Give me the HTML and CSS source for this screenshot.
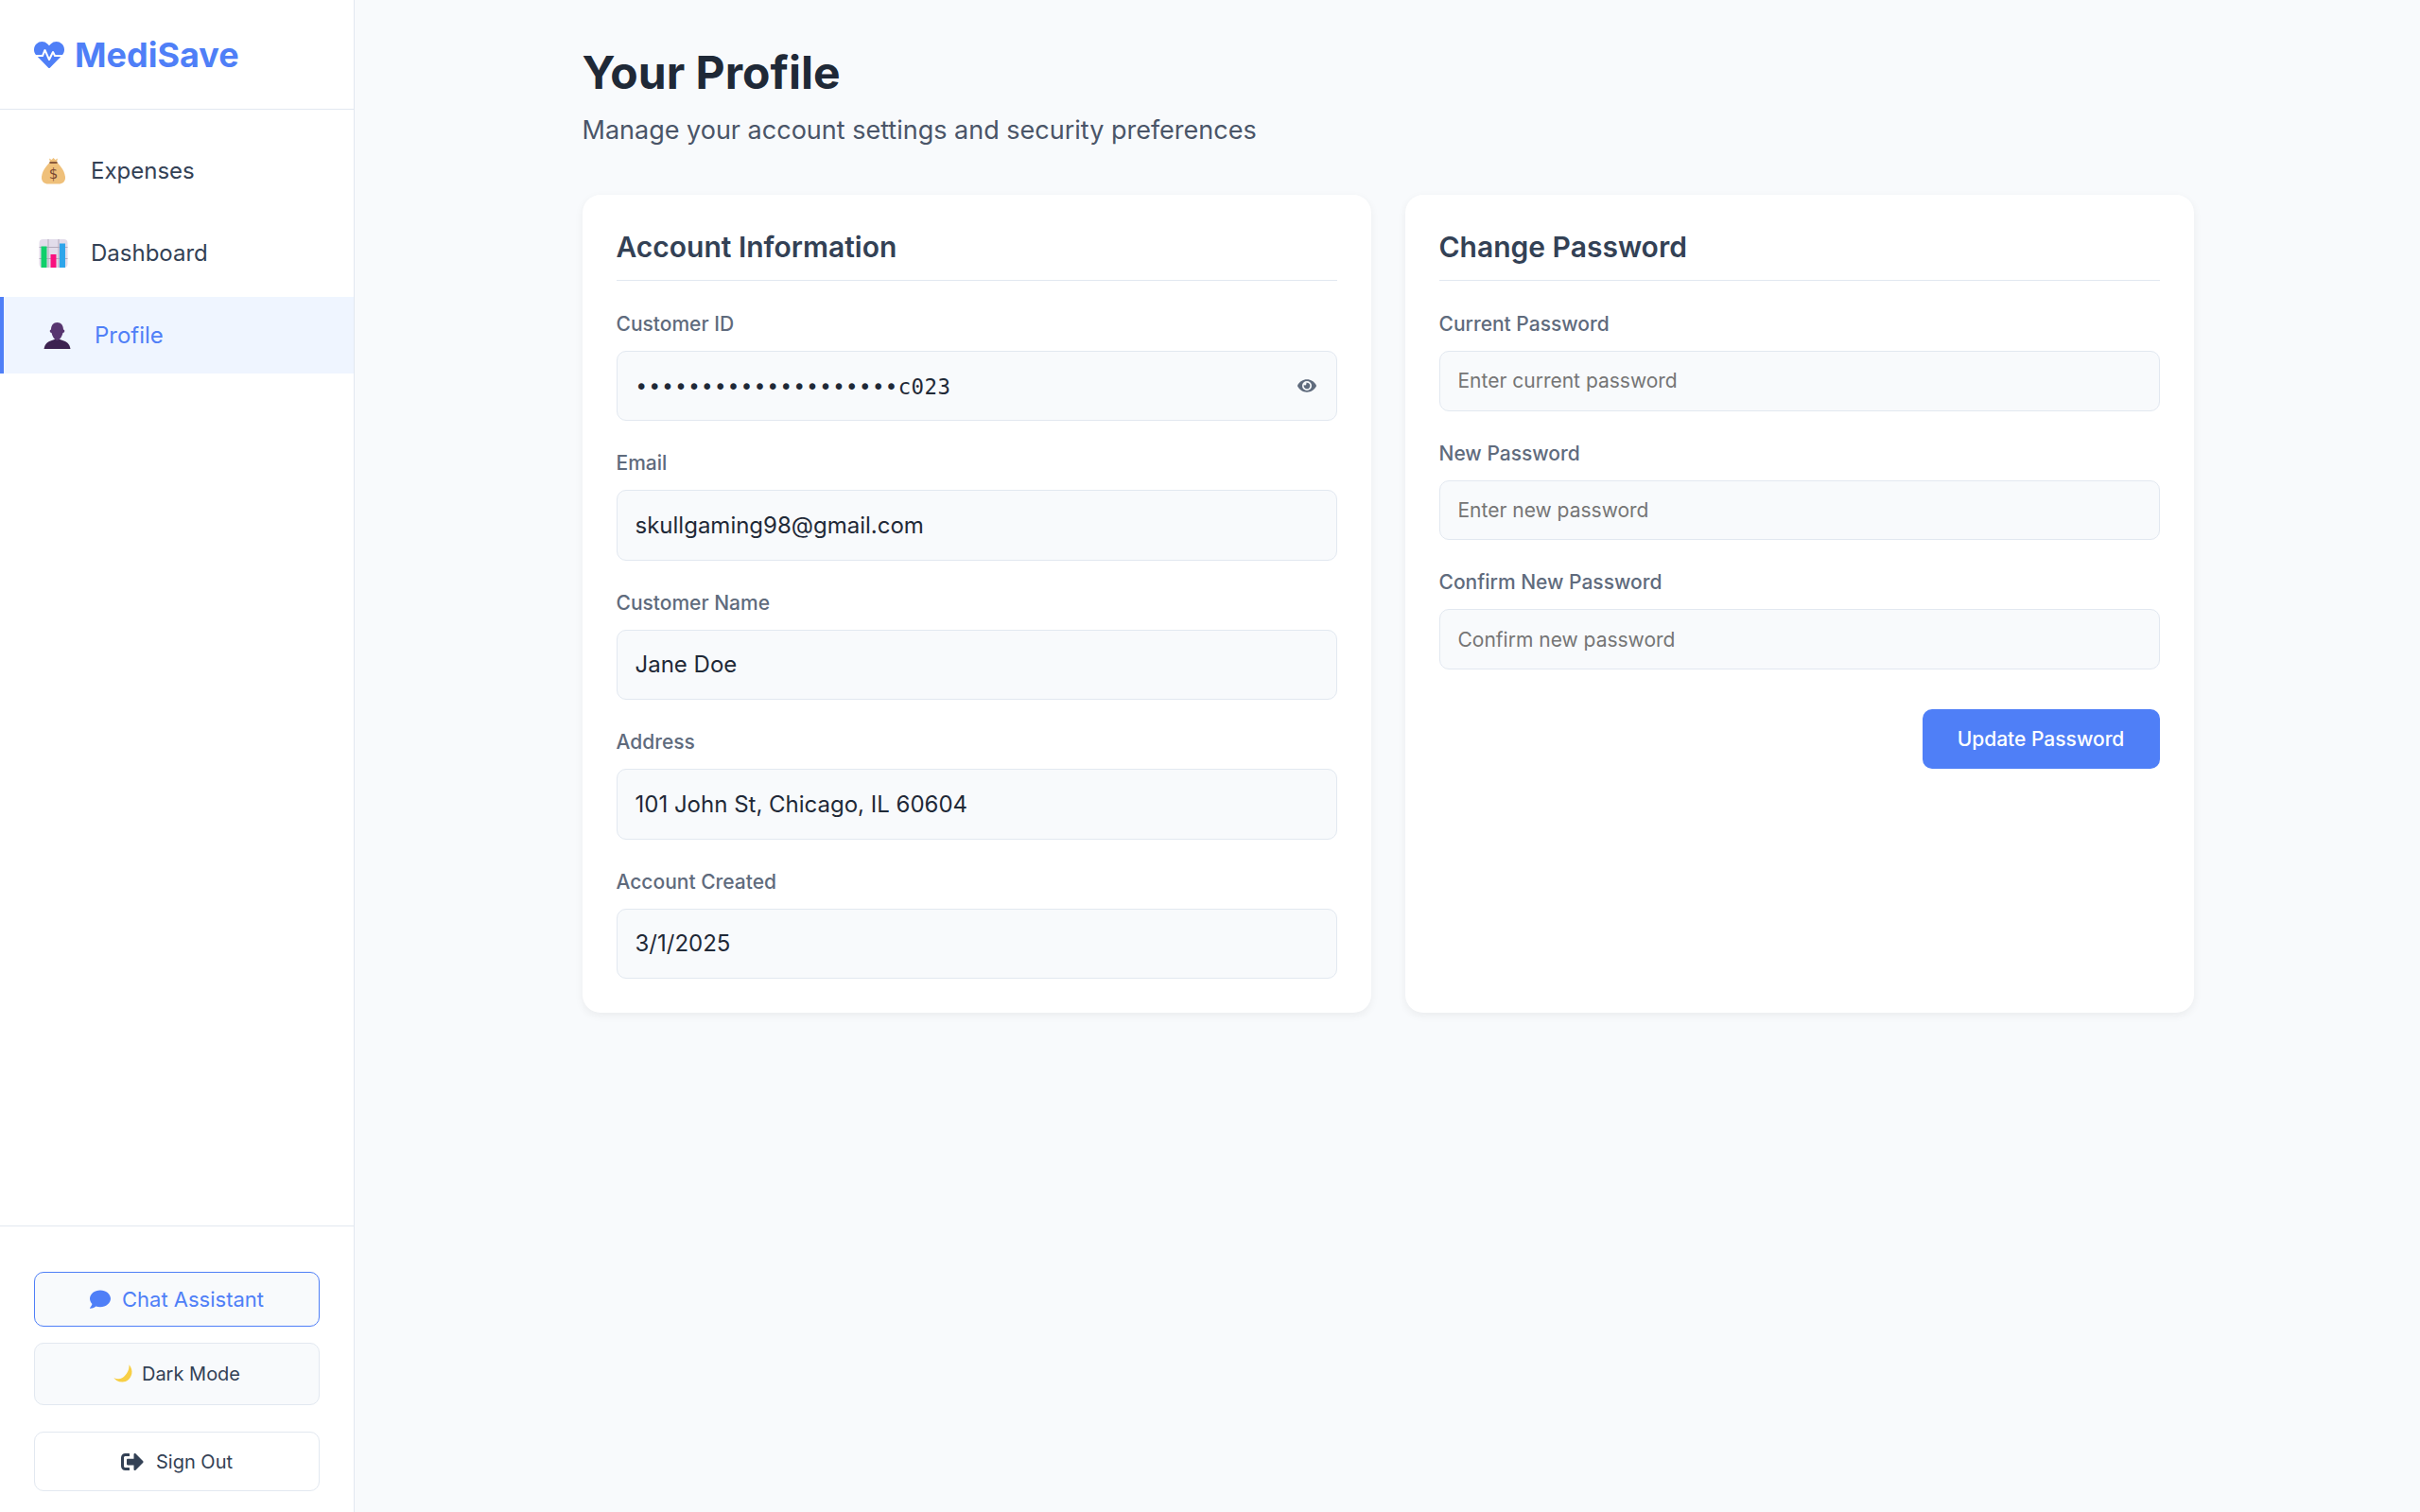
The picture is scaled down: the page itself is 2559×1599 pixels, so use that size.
FILE: index.html
```html
<!DOCTYPE html>
<html lang="en">
<head>
    <meta charset="UTF-8">
    <meta name="viewport" content="width=device-width, initial-scale=1.0">
    <title>MediSave - Your Profile</title>
    <link rel="stylesheet" href="styles.css">
</head>
<body>
    <aside class="sidebar">
        <div class="logo">
            <svg class="logo-icon" viewBox="0 0 512 512"><path d="M320.2 243.8l-49.7 99.4c-6 12.1-23.4 11.7-28.9-.6l-56.9-126.3-30 71.7H60.6l182.5 186.5c7.1 7.3 18.6 7.3 25.7 0L451.4 288H342.3l-22.1-44.2zM473.7 73.9l-2.4-2.5c-51.5-52.6-135.8-52.6-187.4 0L256 100l-27.9-28.5c-51.5-52.7-135.9-52.7-187.4 0l-2.4 2.4C-10.4 123.7-12.5 203 31 256h102.4l35.9-86.2c5.4-12.9 23.6-13.2 29.4-.4l58.2 129.3 49-97.9c5.9-11.8 22.7-11.8 28.6 0l27.6 55.2H481c43.5-53 41.4-132.3-7.3-182.1z"/></svg>
            <span>MediSave</span>
        </div>

        <nav class="nav">
            <a class="nav-item">
                <svg class="emoji" viewBox="0 0 30 30">
                    <path fill="#efc07a" d="M11 5.5h8c1.2 2.6 7.5 7 8.5 15.5.5 5-3 7.5-7 7.5H9.5c-4 0-7.500-2.500-7-7.500C3.500 12.500 9.800 8 11 5.500z"/>
                    <path fill="#efc07a" d="M10.500 1.500l2.500 1.500 2-2 2 2 2.500-1.500-1 4h-7z"/>
                    <rect x="11" y="5" width="8" height="2" fill="#8a5a3a"/>
                    <text x="15" y="23" class="emoji-dollar">$</text>
                </svg>
                <span>Expenses</span>
            </a>
            <a class="nav-item">
                <svg class="emoji" viewBox="0 0 30 30">
                    <rect width="30" height="30" rx="4" fill="#e2dcea"/>
                    <path stroke="#b4aabb" stroke-width="1" fill="none" d="M0 8.500h30M0 20.500h30M9.500 0v30M20.500 0v30"/>
                    <rect x="2" y="7.500" width="6" height="22.500" fill="#10cf6b"/>
                    <rect x="12" y="16" width="6" height="14" fill="#f9107e"/>
                    <rect x="21.500" y="4.500" width="6" height="25.500" fill="#2ea5ea"/>
                </svg>
                <span>Dashboard</span>
            </a>
            <a class="nav-item active">
                <svg class="emoji" viewBox="0 0 30 30">
                    <path fill="#3d2350" d="M1 29c1-5 3-7 7-8.500l4-1.500h6l4 1.500c4 1.500 6 3.500 7 8.500z"/>
                    <path fill="#57356f" d="M15 1c4 0 6.500 3 6.500 7.500l1 .5c.8 1-.2 3-1.500 3-1 3-2 7-6 8-4-1-5-5-6-8-1.300 0-2.300-2-1.500-3l1-.5C8.500 4 11 1 15 1z"/>
                </svg>
                <span>Profile</span>
            </a>
        </nav>

        <div class="sidebar-footer">
            <button class="side-btn chat-btn">
                <svg class="comment-icon" viewBox="0 0 512 512"><path d="M256 32C114.600 32 0 125.100 0 240c0 49.600 21.400 95 57 130.700C44.500 421.100 2.700 466 2.200 466.500c-2.200 2.300-2.800 5.700-1.500 8.700S4.800 480 8 480c66.300 0 116-31.800 140.600-51.400 32.700 12.300 69 19.400 107.400 19.400 141.400 0 256-93.100 256-208S397.400 32 256 32z"/></svg>
                Chat Assistant
            </button>
            <button class="side-btn dark-btn">
                <svg class="moon-icon" viewBox="0 0 20 20"><path fill="#f7cf45" d="M16.500.3C19 3 20 7 19.300 10 18 15 14 18.500 9.500 18.500 5 18.500 2 16.500.3 14c2.700 1.500 6.200 1.800 9.200 0 4-2.500 7.500-8 7-13.700z"/></svg>
                Dark Mode
            </button>
            <button class="side-btn signout-btn">
                <svg class="signout-icon" viewBox="0 0 512 512"><path d="M497 273L329 441c-15 15-41 4.500-41-17v-96H152c-13.300 0-24-10.700-24-24v-96c0-13.300 10.700-24 24-24h136V88c0-21.400 25.900-32 41-17l168 168c9.300 9.400 9.300 24.600 0 34zM192 436v-40c0-6.600-5.400-12-12-12H96c-17.700 0-32-14.300-32-32V160c0-17.700 14.300-32 32-32h84c6.600 0 12-5.400 12-12V76c0-6.600-5.400-12-12-12H96c-53 0-96 43-96 96v192c0 53 43 96 96 96h84c6.600 0 12-5.400 12-12z"/></svg>
                Sign Out
            </button>
        </div>
    </aside>

    <main class="main">
        <div class="content">
            <h1>Your Profile</h1>
            <p class="subtitle">Manage your account settings and security preferences</p>

            <div class="cards">
                <section class="card">
                    <h2>Account Information</h2>
                    <div class="field">
                        <div class="label">Customer ID</div>
                        <div class="value secret">
                            <span class="mono">••••••••••••••••••••c023</span>
                            <svg class="eye-icon" viewBox="0 0 576 512"><path d="M572.520 241.400C518.290 135.590 410.930 64 288 64S57.680 135.640 3.480 241.410a32.350 32.350 0 0 0 0 29.190C57.710 376.410 165.070 448 288 448s230.320-71.640 284.520-177.410a32.350 32.350 0 0 0 0-29.190zM288 400a144 144 0 1 1 144-144 143.930 143.930 0 0 1-144 144zm0-240a95.310 95.310 0 0 0-25.310 3.790 47.850 47.850 0 0 1-66.900 66.900A95.780 95.780 0 1 0 288 160z"/></svg>
                        </div>
                    </div>
                    <div class="field">
                        <div class="label">Email</div>
                        <div class="value">skullgaming98@gmail.com</div>
                    </div>
                    <div class="field">
                        <div class="label">Customer Name</div>
                        <div class="value">Jane Doe</div>
                    </div>
                    <div class="field">
                        <div class="label">Address</div>
                        <div class="value">101 John St, Chicago, IL 60604</div>
                    </div>
                    <div class="field">
                        <div class="label">Account Created</div>
                        <div class="value">3/1/2025</div>
                    </div>
                </section>

                <section class="card">
                    <h2>Change Password</h2>
                    <div class="pw-field">
                        <div class="label">Current Password</div>
                        <div class="pw-input">Enter current password</div>
                    </div>
                    <div class="pw-field">
                        <div class="label">New Password</div>
                        <div class="pw-input">Enter new password</div>
                    </div>
                    <div class="pw-field">
                        <div class="label">Confirm New Password</div>
                        <div class="pw-input">Confirm new password</div>
                    </div>
                    <div class="actions">
                        <button class="primary-btn">Update Password</button>
                    </div>
                </section>
            </div>
        </div>
    </main>
</body>
</html>
```

FILE: styles.css
```css
* {
    box-sizing: border-box;
}

body {
    margin: 0;
    height: 1599px;
    display: flex;
    overflow: hidden;
    font-family: Inter, "Noto Sans", sans-serif;
    background: #f8fafc;
    color: #334155;
}

.sidebar {
    width: 375px;
    flex-shrink: 0;
    display: flex;
    flex-direction: column;
    background: #fff;
    border-right: 1px solid #e2e8f0;
}

.logo {
    height: 116px;
    padding-left: 36px;
    display: flex;
    align-items: center;
    gap: 11px;
    border-bottom: 1px solid #e2e8f0;
    color: #4f7ff7;
    font-size: 36px;
    font-weight: 700;
}

.logo-icon {
    width: 32px;
    height: 32px;
    fill: #4f7ff7;
}

.nav {
    flex: 1;
    padding-top: 24px;
}

.nav-item {
    height: 81px;
    margin-bottom: 6px;
    padding-left: 36px;
    display: flex;
    align-items: center;
    gap: 19px;
    font-size: 24px;
    color: #334155;
}

.nav-item.active {
    border-left: 4px solid #4f7ff7;
    background: #eff5ff;
    color: #4f7ff7;
}

.emoji {
    width: 41px;
    height: 30px;
    flex-shrink: 0;
}

.emoji-dollar {
    font-size: 15px;
    font-family: "DejaVu Sans", sans-serif;
    fill: #7b4a32;
    text-anchor: middle;
}

.sidebar-footer {
    padding: 48px 36px 22px;
    display: flex;
    flex-direction: column;
    border-top: 1px solid #e2e8f0;
}

.side-btn {
    display: flex;
    align-items: center;
    justify-content: center;
    border-radius: 10px;
    font-family: inherit;
    color: #334155;
}

.chat-btn {
    height: 58px;
    gap: 12px;
    margin-bottom: 17px;
    background: #f8fafc;
    border: 1px solid #4f7ff7;
    color: #4f7ff7;
    font-size: 22px;
}

.comment-icon {
    width: 22px;
    height: 22px;
    fill: #4f7ff7;
}

.dark-btn {
    height: 66px;
    gap: 10px;
    margin-bottom: 28px;
    background: #f8fafc;
    border: 1px solid #e2e8f0;
    font-size: 20px;
}

.moon-icon {
    width: 20px;
    height: 20px;
}

.signout-btn {
    height: 63px;
    gap: 13px;
    background: #fff;
    border: 1px solid #e2e8f0;
    font-size: 20px;
}

.signout-icon {
    width: 24px;
    height: 24px;
    fill: #334155;
}

.main {
    flex: 1;
    padding: 47px 0 0 1px;
}

.content {
    width: 1704px;
    margin: 0 auto;
}

h1 {
    margin: 0;
    font-size: 48px;
    line-height: 60px;
    font-weight: 700;
    color: #1f2937;
}

.subtitle {
    margin: 11px 0 0;
    font-size: 27px;
    line-height: 40px;
    color: #4a5568;
}

.cards {
    margin-top: 48px;
    display: grid;
    grid-template-columns: 1fr 1fr;
    gap: 36px;
}

.card {
    height: 865px;
    padding: 36px;
    background: #fff;
    border-radius: 19px;
    box-shadow: 0 3px 10px rgba(0, 0, 0, 0.06);
}

h2 {
    margin: 0 0 31px;
    padding-bottom: 16px;
    font-size: 30px;
    line-height: 38px;
    font-weight: 600;
    color: #334155;
    border-bottom: 1px solid #e2e8f0;
}

.label {
    font-size: 21px;
    line-height: 30px;
    font-weight: 500;
    color: #5f6b7d;
    margin-bottom: 13px;
}

.field {
    margin-bottom: 30px;
}

.value {
    height: 74.400px;
    padding: 0 19px;
    display: flex;
    align-items: center;
    background: #f8fafc;
    border: 1px solid #e2e8f0;
    border-radius: 10px;
    font-size: 24px;
    color: #1f2937;
}

.secret {
    justify-content: space-between;
}

.mono {
    padding-top: 2px;
    font-family: "DejaVu Sans Mono", monospace;
    font-size: 22.400px;
    letter-spacing: 0.430px;
}

.eye-icon {
    width: 20px;
    height: 18px;
    margin-right: 2px;
    fill: #5f6b7d;
}

.pw-field {
    margin-bottom: 30px;
}

.pw-input {
    height: 63.700px;
    padding: 0 19px;
    display: flex;
    align-items: center;
    background: #f8fafc;
    border: 1px solid #e2e8f0;
    border-radius: 10px;
    font-size: 21px;
    color: #757575;
}

.actions {
    margin-top: 42px;
    display: flex;
    justify-content: flex-end;
}

.primary-btn {
    height: 63px;
    width: 251px;
    background: #4f7ff7;
    border: none;
    border-radius: 10px;
    font-family: inherit;
    font-size: 21px;
    font-weight: 500;
    color: #fff;
}
```
